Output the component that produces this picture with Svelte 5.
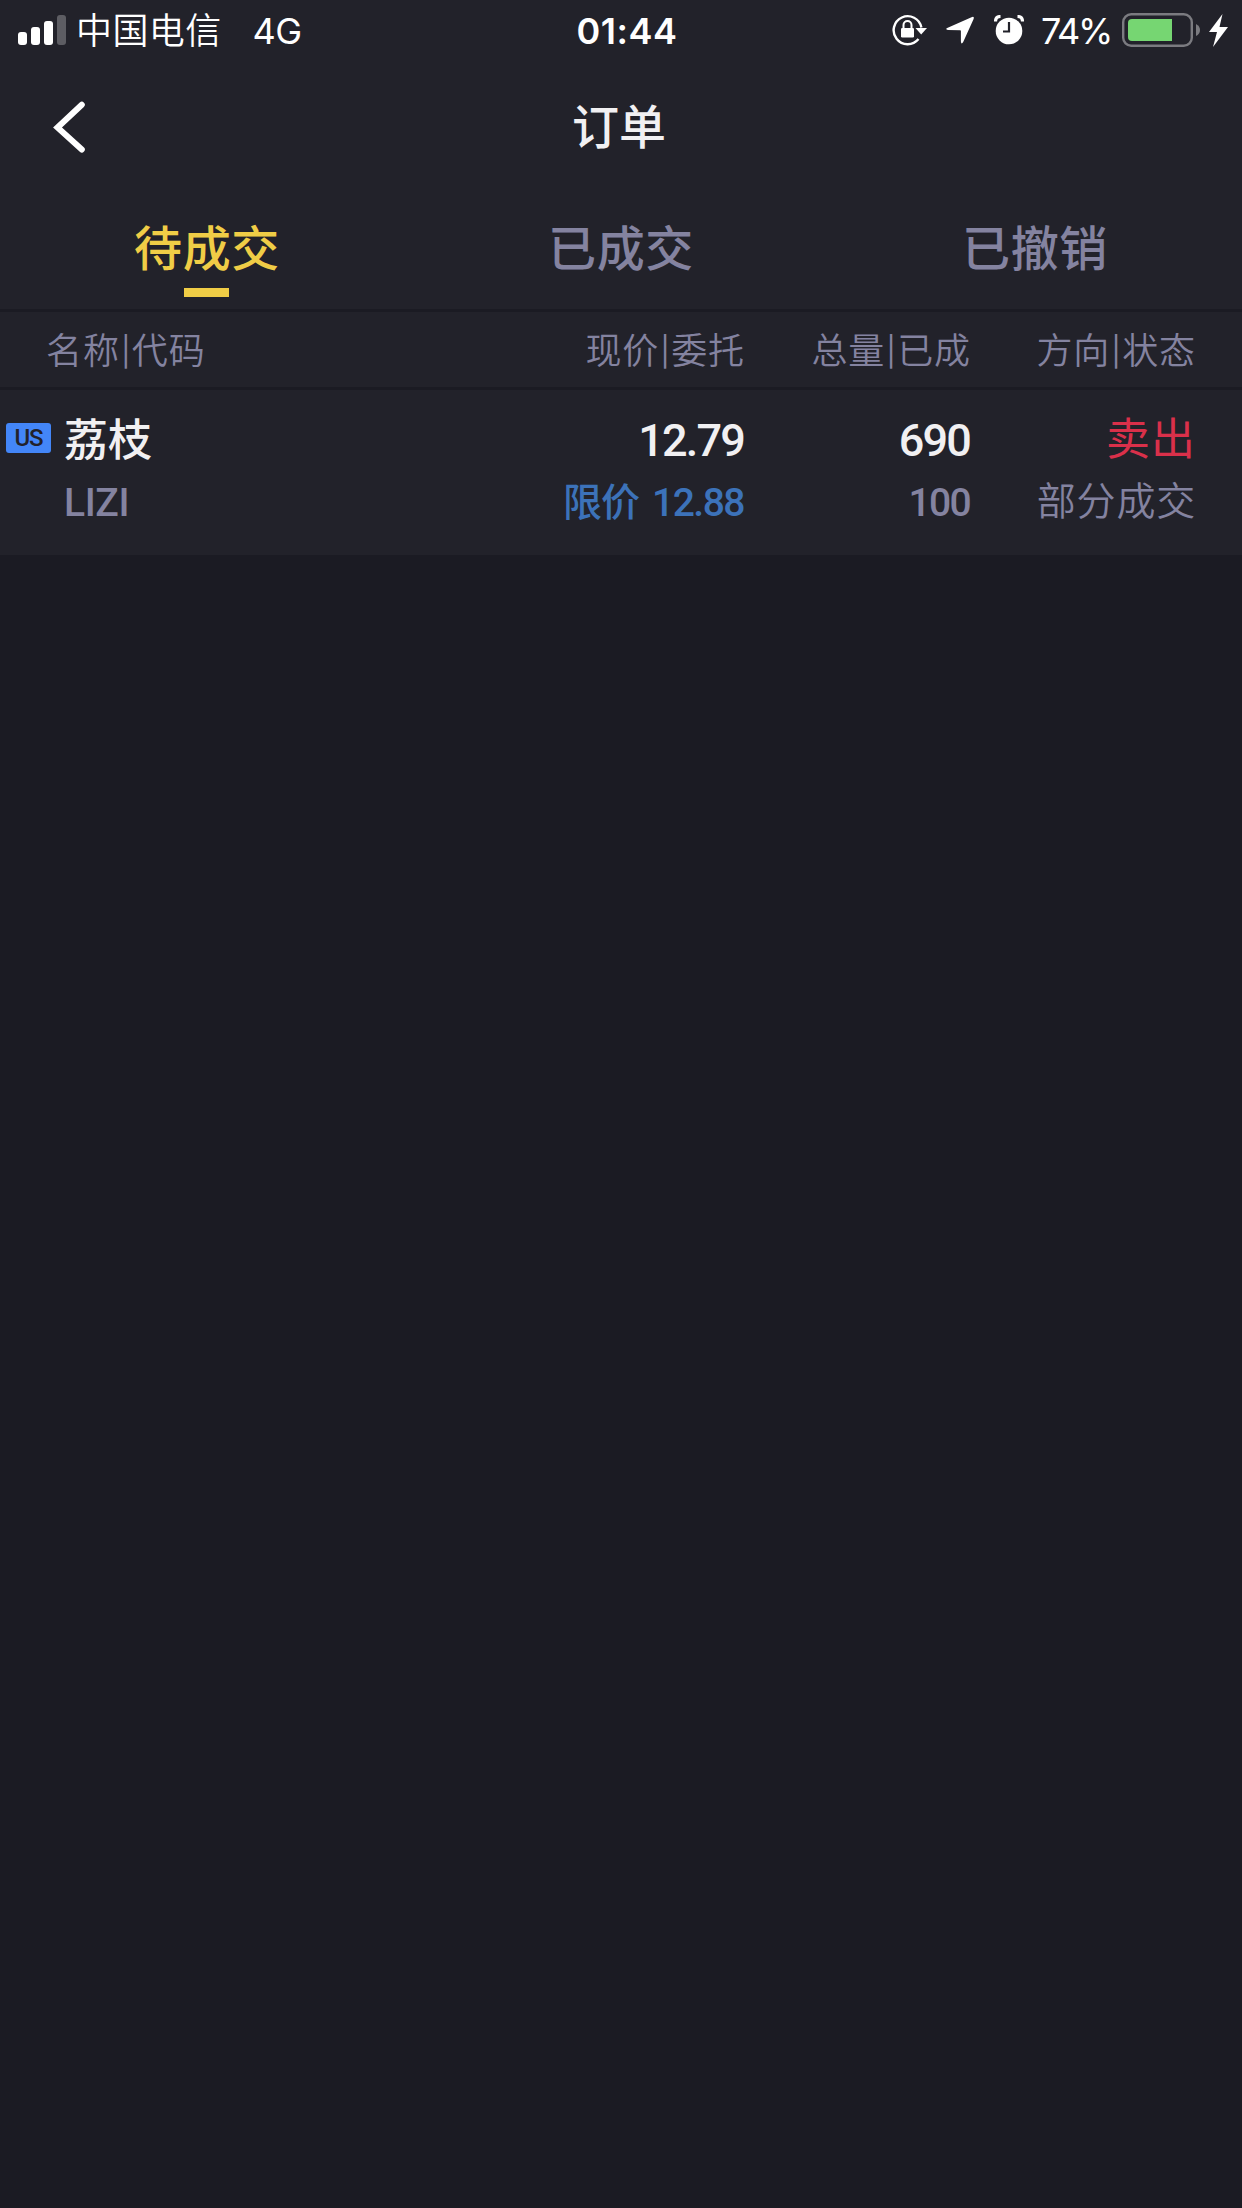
<script>
  const tabs = ['待成交', '已成交', '已撤销'];
  const columns = [
    ['名称', '代码'],
    ['现价', '委托'],
    ['总量', '已成'],
    ['方向', '状态']
  ];
  const orders = [
    {
      market: 'US',
      name: '荔枝',
      code: 'LIZI',
      price: '12.79',
      type: '限价',
      entrust: '12.88',
      total: '690',
      done: '100',
      side: '卖出',
      state: '部分成交'
    }
  ];

  let active = $state(0);
</script>

<svelte:head>
  <title>订单</title>
</svelte:head>

<div class="page">
  <div class="status">
    <div class="status-left">
      <svg class="signal" width="48" height="30" viewBox="0 0 48 30" fill="#fff">
        <rect x="0" y="17" width="9" height="13" rx="3" />
        <rect x="13" y="12" width="9" height="18" rx="3" />
        <rect x="26" y="6" width="9" height="24" rx="3" />
        <rect x="39" y="0" width="9" height="30" rx="3" opacity="0.27" />
      </svg>
      <span class="carrier">中国电信</span>
      <span class="network">4G</span>
    </div>
    <span class="time">01:44</span>
    <div class="status-right">
      <svg class="lock" width="36" height="32" viewBox="0 0 36 32">
        <path d="M26.5 25.1A14 14 0 1 1 29.4 13.5" fill="none" stroke="#fff" stroke-width="2.4" />
        <path d="M23.5 14H35l-5.8 6.5z" fill="#fff" />
        <rect x="9" y="14" width="13" height="9.5" rx="1.3" fill="#fff" />
        <path d="M11.5 15v-4a4 4 0 0 1 8 0v4" fill="none" stroke="#fff" stroke-width="2" />
      </svg>
      <svg class="arrow" width="29" height="29" viewBox="0 0 29 29">
        <path d="M1.2 12 25.5 1.2q3.2-1.2 2 2L17.2 26q-1.9 3-2.3-.5V15q0-.8-.8-.8L2 14q-3.2-.5-.8-2z" fill="#fff" />
      </svg>
      <svg class="alarm" width="30" height="30" viewBox="0 0 30 30">
        <circle cx="15" cy="16" r="13.3" fill="#fff" />
        <path d="M1.5 6.5Q1.5 1.5 6.5 1.5M28.5 6.5Q28.5 1.5 23.5 1.5" fill="none" stroke="#fff" stroke-width="3.2" />
        <path d="M15 7v9.5H9" fill="none" stroke="#22222a" stroke-width="2.2" />
      </svg>
      <span class="percent">74%</span>
      <svg class="battery" width="78" height="34" viewBox="0 0 78 34">
        <rect x="1.2" y="1.2" width="68.6" height="31.6" rx="8" fill="none" stroke="#7b7b80" stroke-width="2.4" />
        <path d="M10 6h40v22H10q-4 0-4-4V10q0-4 4-4z" fill="#76d672" />
        <path d="M74 11q4 2 4 6t-4 6z" fill="#7b7b80" />
      </svg>
      <svg class="bolt" width="19" height="33" viewBox="0 0 19 33">
        <path d="M13.5 0 0 18h8L4 33 19 13h-8.5z" fill="#fff" />
      </svg>
    </div>
  </div>

  <header class="nav">
    <button class="back" aria-label="返回">
      <svg width="33" height="52" viewBox="0 0 33 52">
        <path d="M28.8 3.8 4.5 26.5l24.3 22" fill="none" stroke="#fff" stroke-width="6" stroke-linecap="round" />
      </svg>
    </button>
    <h1>订单</h1>
  </header>

  <nav class="tabs">
    {#each tabs as tab, i}
      <button class="tab" class:active={active === i} onclick={() => (active = i)}>
        <span>{tab}</span>
      </button>
    {/each}
  </nav>

  <div class="grid head">
    {#each columns as [top, bottom]}
      <div class="column">{top}<span class="bar">|</span>{bottom}</div>
    {/each}
  </div>

  {#each orders as order}
    <div class="grid row">
      <div class="stock">
        <span class="market">{order.market}</span>
        <div class="cell">
          <span class="name">{order.name}</span>
          <span class="code">{order.code}</span>
        </div>
      </div>
      <div class="cell">
        <span class="num">{order.price}</span>
        <span class="entrust"><span class="type">{order.type}</span>{order.entrust}</span>
      </div>
      <div class="cell">
        <span class="num">{order.total}</span>
        <span class="sub">{order.done}</span>
      </div>
      <div class="cell text">
        <span class="side">{order.side}</span>
        <span class="state">{order.state}</span>
      </div>
    </div>
  {/each}
</div>

<style>
  :global(body) {
    background: #1b1b23;
  }

  .page {
    min-height: 2208px;
    font-family: Roboto, 'Noto Sans CJK SC', sans-serif;
    color: #f1f0f2;
    white-space: nowrap;
  }

  button {
    padding: 0;
    border: 0;
    background: none;
    color: inherit;
    font: inherit;
  }

  .status {
    display: grid;
    grid-template-columns: 1fr auto 1fr;
    height: 60px;
    line-height: 62px;
    padding: 0 14px 0 18px;
    background: #22222a;
    color: #fff;
    font-family: Inter, 'Noto Sans CJK SC', sans-serif;
    font-size: 36px;
  }

  .status-left,
  .status-right {
    display: flex;
    align-items: center;
    height: 60px;
  }

  .status-left span,
  .percent {
    padding-top: 2px;
  }

  .status-right {
    justify-content: flex-end;
  }

  .carrier {
    margin-left: 10px;
    font-weight: 350;
    letter-spacing: 0.4px;
  }

  .network {
    margin-left: 31px;
    font-weight: 400;
    letter-spacing: -0.5px;
  }

  .time {
    margin-left: 8px;
    font-weight: 600;
    letter-spacing: 0.5px;
  }

  .arrow {
    margin-left: 18px;
  }

  .alarm {
    margin-left: 19px;
  }

  .percent {
    margin-left: 17px;
    font-weight: 400;
    letter-spacing: -2.3px;
  }

  .battery {
    margin-left: 11px;
  }

  .bolt {
    margin-left: 9px;
  }

  .nav {
    display: grid;
    grid-template-columns: 1fr auto 1fr;
    align-items: center;
    height: 134px;
    background: #22222a;
  }

  .back {
    display: flex;
    margin-left: 53px;
  }

  h1 {
    height: 134px;
    margin: 0 4px 0 0;
    font-size: 47px;
    font-weight: 500;
    line-height: 136px;
  }

  .tabs {
    display: grid;
    grid-template-columns: repeat(3, 1fr);
    height: 115px;
    background: #22222a;
    border-bottom: 3px solid #1b1b23;
  }

  .tab {
    display: flex;
    flex-direction: column;
    align-items: center;
    padding-top: 21px;
    color: #8483a0;
    font-size: 48px;
    font-weight: 500;
    line-height: 70px;
    letter-spacing: 0.6px;
  }

  .tab.active {
    color: #f0cd46;
  }

  .tab.active::after {
    content: '';
    width: 45px;
    height: 9px;
    margin: 3px 1px 0 0;
    background: #f0cd46;
  }

  .grid {
    display: grid;
    grid-template-columns: 1fr 300px 226px 225px;
    padding-right: 46px;
    background: #22222a;
    text-align: right;
  }

  .head {
    height: 75px;
    border-bottom: 3px solid #1b1b23;
    color: #8483a0;
  }

  .column {
    display: flex;
    justify-content: flex-end;
    font-family: Inter, 'Noto Sans CJK SC', sans-serif;
    font-size: 36px;
    font-weight: 350;
    line-height: 79px;
    letter-spacing: 0.9px;
  }

  .column:first-child {
    justify-content: flex-start;
    padding-left: 46px;
  }

  .bar {
    width: 12px;
    font-size: 29px;
    font-weight: 400;
    letter-spacing: 0;
    text-align: center;
  }

  .row {
    height: 165px;
  }

  .stock {
    display: flex;
    align-items: flex-start;
    text-align: left;
  }

  .market {
    width: 45px;
    height: 30px;
    margin: 33px 13px 0 6px;
    border-radius: 3px;
    background: #4386f8;
    color: #22222a;
    font-size: 24px;
    font-weight: 500;
    line-height: 30px;
    letter-spacing: -1.2px;
    text-align: center;
  }

  .cell {
    display: flex;
    flex-direction: column;
    padding-top: 20px;
    line-height: 62px;
  }

  .cell.text {
    padding-top: 19px;
  }

  .name,
  .side {
    font-size: 44px;
    font-weight: 500;
  }

  .num {
    margin-right: 1px;
    font-size: 45px;
    font-weight: 500;
    letter-spacing: -1.8px;
  }

  .code,
  .sub,
  .entrust,
  .state {
    color: #8483a0;
    font-size: 39px;
  }

  .code {
    font-weight: 500;
    letter-spacing: -0.4px;
  }

  .sub {
    margin-right: 1px;
    font-weight: 500;
    letter-spacing: -1.7px;
  }

  .entrust {
    margin-right: 1px;
    color: #3c72b9;
    font-weight: 500;
    letter-spacing: -1.5px;
  }

  .type {
    margin-right: 13px;
    letter-spacing: -1px;
  }

  .side {
    color: #da304a;
    font-weight: 400;
    letter-spacing: 1px;
  }

  .state {
    font-weight: 350;
    letter-spacing: 0.8px;
  }
</style>
